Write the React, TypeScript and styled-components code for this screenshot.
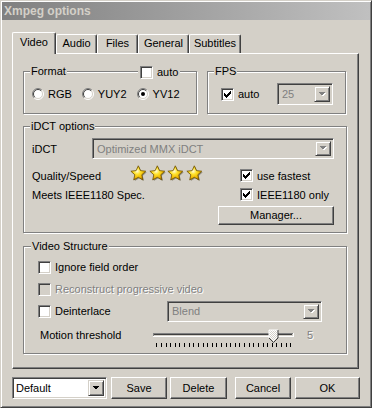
import React from "react";
import styled, { createGlobalStyle, css } from "styled-components";

const Global = createGlobalStyle`
  html, body { margin: 0; padding: 0; background: #d4d0c8; }
  body { font-family: "Liberation Sans", Arial, sans-serif; font-size: 11px; color: #000; }
  * { box-sizing: border-box; }
`;

const raised = css`
  border: 1px solid;
  border-color: #fff #404040 #404040 #fff;
  box-shadow: inset -1px -1px #808080, inset 1px 1px #d4d0c8;
`;
const sunken = css`
  border: 1px solid;
  border-color: #808080 #fff #fff #808080;
  box-shadow: inset 1px 1px #404040, inset -1px -1px #d4d0c8;
`;

const Window = styled.div`
  width: 372px;
  height: 408px;
  background: #d4d0c8;
  padding: 1px;
  border: 1px solid;
  border-color: #d4d0c8 #404040 #404040 #d4d0c8;
  box-shadow: inset 1px 1px #fff, inset -1px -1px #808080;
  display: flex;
  flex-direction: column;
`;

const TitleBar = styled.div`
  height: 18px;
  flex: none;
  background: linear-gradient(to right, #808080, #c0c0c0);
  color: #d4d0c8;
  font-weight: bold;
  font-size: 12px;
  display: flex;
  align-items: center;
  padding-left: 2px;
`;

const Body = styled.div`
  padding: 12px 11px 0 10px;
  display: flex;
  flex-direction: column;
`;

const TabRow = styled.div`
  display: flex;
  align-items: flex-end;
  height: 21px;
  position: relative;
  z-index: 1;
`;

const Tab = styled.div<{ $w: number; $active?: boolean }>`
  width: ${(p) => p.$w}px;
  height: ${(p) => (p.$active ? 22 : 19)}px;
  margin-bottom: ${(p) => (p.$active ? -1 : 0)}px;
  background: #d4d0c8;
  border-top: 1px solid #fff;
  border-left: 1px solid #fff;
  border-right: 1px solid #404040;
  border-radius: 2px 2px 0 0;
  box-shadow: inset -1px 0 #808080;
  display: flex;
  justify-content: center;
  padding-top: ${(p) => (p.$active ? 3 : 2)}px;
  line-height: 13px;
`;

const Panel = styled.div`
  width: 347px;
  height: 316px;
  border: 1px solid;
  border-color: #fff #404040 #404040 #fff;
  box-shadow: inset -1px -1px #808080;
  padding: 17px 11px 0 10px;
  display: flex;
  flex-direction: column;
`;

const TopRow = styled.div`
  display: flex;
  gap: 10px;
`;

const Group = styled.div<{ $w?: number; $h: number; $mt?: number }>`
  position: relative;
  width: ${(p) => (p.$w ? `${p.$w}px` : "auto")};
  height: ${(p) => p.$h}px;
  margin-top: ${(p) => p.$mt ?? 0}px;
  border: 1px solid #808080;
  box-shadow: inset 1px 1px #fff, 1px 1px #fff;
`;

const Legend = styled.span<{ $left?: number }>`
  position: absolute;
  top: -7px;
  left: ${(p) => p.$left ?? 6}px;
  padding: 0 1px;
  background: #d4d0c8;
  line-height: 13px;
`;

const LegendCheck = styled.div`
  position: absolute;
  top: -6px;
  left: 114px;
  padding: 0 2px;
  background: #d4d0c8;
  display: flex;
  align-items: center;
  gap: 4px;
  line-height: 13px;
`;

const RadioRow = styled.div`
  display: flex;
  gap: 10px;
  padding: 16px 0 0 8px;
`;

const FpsRow = styled.div`
  display: flex;
  align-items: center;
  justify-content: space-between;
  padding: 11px 12px 0 13px;
`;

const Item = styled.label<{ $disabled?: boolean; $w?: number; $pl?: number }>`
  display: flex;
  align-items: center;
  gap: 4px;
  white-space: nowrap;
  width: ${(p) => (p.$w ? `${p.$w}px` : "auto")};
  padding-left: ${(p) => p.$pl ?? 0}px;
  color: ${(p) => (p.$disabled ? "#808080" : "#000")};
  text-shadow: ${(p) => (p.$disabled ? "1px 1px 0 #fff" : "none")};
`;

const Box = styled.span<{ $disabled?: boolean }>`
  width: 13px;
  height: 13px;
  flex: none;
  ${sunken};
  background: ${(p) => (p.$disabled ? "#d4d0c8" : "#fff")};
  display: flex;
  align-items: center;
  justify-content: center;
`;

const ComboBox = styled.div<{ $w: number; $h?: number; $white?: boolean }>`
  width: ${(p) => p.$w}px;
  height: ${(p) => p.$h ?? 21}px;
  flex: none;
  ${sunken};
  background: ${(p) => (p.$white ? "#fff" : "#d4d0c8")};
  display: flex;
  padding: 2px;
`;

const ComboText = styled.span<{ $disabled?: boolean }>`
  flex: 1;
  display: flex;
  align-items: center;
  padding-left: ${(p) => (p.$disabled ? 2 : 1)}px;
  color: ${(p) => (p.$disabled ? "#808080" : "#000")};
  white-space: nowrap;
  overflow: hidden;
`;

const ArrowBtn = styled.span`
  width: 16px;
  flex: none;
  border: 1px solid;
  border-color: #d4d0c8 #404040 #404040 #d4d0c8;
  box-shadow: inset 1px 1px #fff, inset -1px -1px #808080;
  background: #d4d0c8;
  display: flex;
  align-items: center;
  justify-content: center;
`;

const IdctRow = styled.div`
  display: flex;
  align-items: center;
  padding: 11px 0 0 8px;
`;

const FieldLabel = styled.span<{ $w: number }>`
  width: ${(p) => p.$w}px;
  flex: none;
  white-space: nowrap;
`;

const IdctGrid = styled.div`
  display: grid;
  grid-template-columns: 98px 88px 116px;
  grid-template-rows: 19px 19px 19px;
  margin-top: 7px;
  padding-left: 8px;
  align-items: center;
`;

const Cell = styled.div<{ $col: string; $row: number; $pl?: number; $mt?: number }>`
  grid-column: ${(p) => p.$col};
  grid-row: ${(p) => p.$row};
  padding-left: ${(p) => p.$pl ?? 0}px;
  margin-top: ${(p) => p.$mt ?? 0}px;
  white-space: nowrap;
  display: flex;
  align-items: center;
`;

const Stars = styled.div`
  display: flex;
  gap: 1.5px;
  margin-top: -4px;
`;

const Button = styled.button<{ $w: number; $h?: number; $ml?: number }>`
  width: ${(p) => p.$w}px;
  height: ${(p) => p.$h ?? 22}px;
  margin-left: ${(p) => p.$ml ?? 0}px;
  flex: none;
  ${raised};
  background: #d4d0c8;
  font-family: inherit;
  font-size: 11px;
  color: #000;
  padding: 0;
  display: flex;
  align-items: center;
  justify-content: center;
`;

const StructRows = styled.div`
  display: flex;
  flex-direction: column;
  padding: 9px 0 0 14px;
`;

const StructRow = styled.div<{ $h: number }>`
  height: ${(p) => p.$h}px;
  display: flex;
  align-items: center;
`;

const MotionLabel = styled.span`
  width: 112px;
  padding-left: 2px;
  white-space: nowrap;
`;

const Value = styled.span`
  margin-left: 7px;
  color: #808080;
  text-shadow: 1px 1px 0 #fff;
`;

const BottomRow = styled.div`
  display: flex;
  margin-top: 8px;
  height: 22px;
`;

const checkPixels: [number, number][] = [
  [6, 0], [5, 1], [6, 1], [0, 2], [4, 2], [5, 2], [6, 2], [0, 3], [1, 3], [3, 3], [4, 3], [5, 3],
  [0, 4], [1, 4], [2, 4], [3, 4], [4, 4], [1, 5], [2, 5], [3, 5], [2, 6],
];

function Check({ checked, disabled }: { checked?: boolean; disabled?: boolean }) {
  return (
    <Box $disabled={disabled}>
      {checked && (
        <svg width="7" height="7" viewBox="0 0 7 7" shapeRendering="crispEdges">
          {checkPixels.map(([x, y]) => (
            <rect key={`${x}-${y}`} x={x} y={y} width="1" height="1" fill={disabled ? "#808080" : "#000"} />
          ))}
        </svg>
      )}
    </Box>
  );
}

function Radio({ checked }: { checked?: boolean }) {
  return (
    <svg width="12" height="12" viewBox="0 0 12 12" style={{ flex: "none" }}>
      <circle cx="6" cy="6" r="5" fill="#fff" />
      <path d="M2.1 9.9 A5.5 5.5 0 0 1 9.9 2.1" fill="none" stroke="#808080" strokeWidth="1" />
      <path d="M9.9 2.1 A5.5 5.5 0 0 1 2.1 9.9" fill="none" stroke="#fff" strokeWidth="1" />
      <path d="M2.8 9.2 A4.5 4.5 0 0 1 9.2 2.8" fill="none" stroke="#404040" strokeWidth="1" />
      <path d="M9.2 2.8 A4.5 4.5 0 0 1 2.8 9.2" fill="none" stroke="#d4d0c8" strokeWidth="1" />
      {checked && <circle cx="6" cy="6" r="2" fill="#000" />}
    </svg>
  );
}

function Arrow({ disabled }: { disabled?: boolean }) {
  return (
    <svg width="8" height="5" viewBox="0 0 8 5" shapeRendering="crispEdges">
      {disabled && <polygon points="1,1 8,1 4.5,4.5" fill="#fff" />}
      <polygon points="0,0 7,0 3.5,3.5" fill={disabled ? "#808080" : "#000"} />
    </svg>
  );
}

function Combo({ w, h, value, disabled, white }: { w: number; h?: number; value: string; disabled?: boolean; white?: boolean }) {
  return (
    <ComboBox $w={w} $h={h} $white={white}>
      <ComboText $disabled={disabled}>{value}</ComboText>
      <ArrowBtn>
        <Arrow disabled={disabled} />
      </ArrowBtn>
    </ComboBox>
  );
}

function starPoints(cx: number, cy: number, R: number, r: number) {
  const pts: string[] = [];
  for (let i = 0; i < 10; i++) {
    const a = ((-90 + i * 36) * Math.PI) / 180;
    const rad = i % 2 ? r : R;
    pts.push(`${(cx + rad * Math.cos(a)).toFixed(2)},${(cy + rad * Math.sin(a)).toFixed(2)}`);
  }
  return pts.join(" ");
}

function Star() {
  return (
    <svg width="17" height="17" viewBox="0 0 17 17">
      <defs>
        <radialGradient id="starGrad" cx="42%" cy="38%" r="65%">
          <stop offset="0" stopColor="#fffbd8" />
          <stop offset="0.35" stopColor="#ffe22a" />
          <stop offset="0.75" stopColor="#eeb400" />
          <stop offset="1" stopColor="#a87000" />
        </radialGradient>
      </defs>
      <polygon points={starPoints(9.3, 9.6, 7.8, 3.7)} fill="#8c8878" />
      <polygon points={starPoints(8.3, 8.6, 7.8, 3.7)} fill="url(#starGrad)" stroke="#6e5200" strokeWidth="0.8" strokeLinejoin="round" />
    </svg>
  );
}

function Slider() {
  const ticks = Array.from({ length: 30 }, (_, i) => 6.3 + (i * 134) / 29);
  return (
    <svg width="150" height="26" viewBox="0 0 150 26" shapeRendering="crispEdges" style={{ flex: "none" }}>
      <defs>
        <pattern id="dither" width="2" height="2" patternUnits="userSpaceOnUse">
          <rect width="2" height="2" fill="#fff" />
          <rect width="1" height="1" fill="#d4d0c8" />
          <rect x="1" y="1" width="1" height="1" fill="#d4d0c8" />
        </pattern>
      </defs>
      <rect x="3" y="11" width="140" height="1" fill="#808080" />
      <rect x="3" y="11" width="1" height="4" fill="#808080" />
      <rect x="4" y="12" width="138" height="1" fill="#404040" />
      <rect x="3" y="14" width="141" height="1" fill="#fff" />
      <rect x="143" y="11" width="1" height="4" fill="#fff" />
      {ticks.map((x, i) => (
        <rect key={i} x={Math.round(x)} y="21" width="1" height="4" fill="#000" />
      ))}
      <polygon points="119,8 128,8 128,16 123.5,20.5 119,16" fill="url(#dither)" />
      <polyline points="119,16 119,8 128,8" fill="none" stroke="#fff" strokeWidth="1" shapeRendering="auto" />
      <polyline points="128,8 128,16 123.5,20.5 119,16" fill="none" stroke="#404040" strokeWidth="1" shapeRendering="auto" />
    </svg>
  );
}

export default function App() {
  return (
    <>
      <Global />
      <Window>
        <TitleBar>Xmpeg options</TitleBar>
        <Body>
          <TabRow>
            <Tab $w={44} $active>Video</Tab>
            <Tab $w={41}>Audio</Tab>
            <Tab $w={41}>Files</Tab>
            <Tab $w={51}>General</Tab>
            <Tab $w={52}>Subtitles</Tab>
          </TabRow>
          <Panel>
            <TopRow>
              <Group $w={174} $h={43}>
                <Legend>Format</Legend>
                <LegendCheck>
                  <Check />
                  <span>auto</span>
                </LegendCheck>
                <RadioRow>
                  <Item>
                    <Radio />
                    RGB
                  </Item>
                  <Item>
                    <Radio />
                    YUY2
                  </Item>
                  <Item>
                    <Radio checked />
                    YV12
                  </Item>
                </RadioRow>
              </Group>
              <Group $w={139} $h={43}>
                <Legend>FPS</Legend>
                <FpsRow>
                  <Item>
                    <Check checked />
                    auto
                  </Item>
                  <Combo w={56} h={22} value="25" disabled />
                </FpsRow>
              </Group>
            </TopRow>

            <Group $h={107} $mt={12}>
              <Legend>iDCT options</Legend>
              <IdctRow>
                <FieldLabel $w={60}>iDCT</FieldLabel>
                <Combo w={242} value="Optimized MMX iDCT" disabled />
              </IdctRow>
              <IdctGrid>
                <Cell $col="1" $row={1}>Quality/Speed</Cell>
                <Cell $col="2" $row={1}>
                  <Stars>
                    <Star />
                    <Star />
                    <Star />
                    <Star />
                  </Stars>
                </Cell>
                <Cell $col="3" $row={1} $pl={22}>
                  <Item>
                    <Check checked />
                    use fastest
                  </Item>
                </Cell>
                <Cell $col="1 / span 2" $row={2}>Meets IEEE1180 Spec.</Cell>
                <Cell $col="3" $row={2} $pl={22}>
                  <Item>
                    <Check checked />
                    IEEE1180 only
                  </Item>
                </Cell>
                <Cell $col="3" $row={3} $mt={3}>
                  <Button $w={116} $h={19}>Manager...</Button>
                </Cell>
              </IdctGrid>
            </Group>

            <Group $h={108} $mt={13}>
              <Legend $left={7}>Video Structure</Legend>
              <StructRows>
                <StructRow $h={22}>
                  <Item>
                    <Check />
                    Ignore field order
                  </Item>
                </StructRow>
                <StructRow $h={22}>
                  <Item $disabled>
                    <Check disabled />
                    Reconstruct progressive video
                  </Item>
                </StructRow>
                <StructRow $h={22}>
                  <Item $w={129}>
                    <Check />
                    Deinterlace
                  </Item>
                  <Combo w={155} value="Blend" disabled />
                </StructRow>
                <StructRow $h={26}>
                  <MotionLabel>Motion threshold</MotionLabel>
                  <Slider />
                  <Value>5</Value>
                </StructRow>
              </StructRows>
            </Group>
          </Panel>
          <BottomRow>
            <Combo w={95} h={22} value="Default" white />
            <Button $w={56} $ml={4}>Save</Button>
            <Button $w={57} $ml={3}>Delete</Button>
            <Button $w={56} $ml={8}>Cancel</Button>
            <Button $w={65} $ml={4}>OK</Button>
          </BottomRow>
        </Body>
      </Window>
    </>
  );
}
